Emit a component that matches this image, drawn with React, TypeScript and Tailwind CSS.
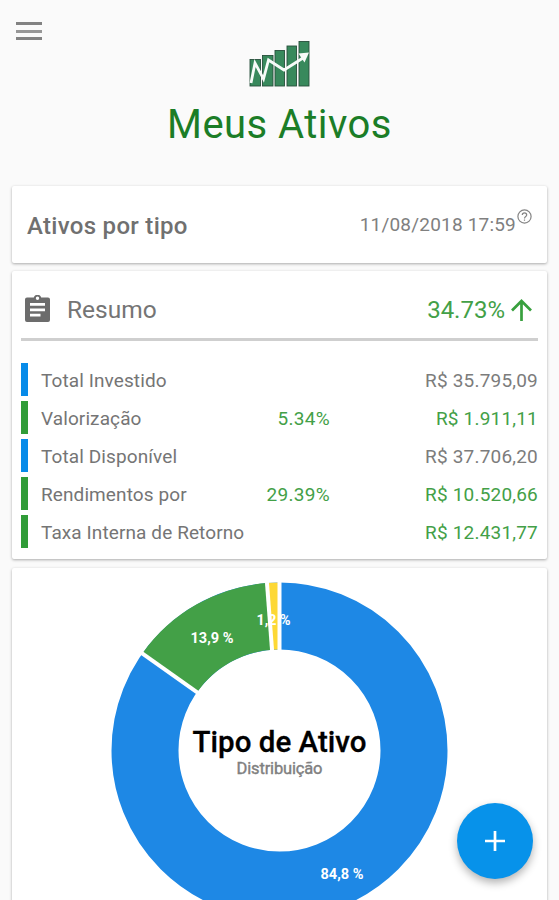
import React from "react";

type Row = { label: string; pct?: string; value: string; bar: string; tone: string };

const rows: Row[] = [
  { label: "Total Investido", value: "R$ 35.795,09", bar: "bg-[#078be9]", tone: "text-[#7c7c7c]" },
  { label: "Valorização", pct: "5.34%", value: "R$ 1.911,11", bar: "bg-[#309c38]", tone: "text-[#43a047]" },
  { label: "Total Disponível", value: "R$ 37.706,20", bar: "bg-[#078be9]", tone: "text-[#7c7c7c]" },
  { label: "Rendimentos por", pct: "29.39%", value: "R$ 10.520,66", bar: "bg-[#309c38]", tone: "text-[#43a047]" },
  { label: "Taxa Interna de Retorno", value: "R$ 12.431,77", bar: "bg-[#309c38]", tone: "text-[#43a047]" },
];

const card = "mx-3 w-[535px] shrink-0 rounded-[2px] bg-white shadow-[0_1px_3px_rgba(0,0,0,0.32)]";

function Logo() {
  return (
    <svg className="mt-[40px] block h-[48px] w-[62px]" viewBox="0 0 62 48">
      <g fill="#38895c" stroke="#28503c" strokeWidth="0.9">
        <rect x="1" y="19.5" width="10.5" height="26.5" />
        <rect x="13.5" y="15.5" width="10.5" height="30.5" />
        <rect x="26" y="10.5" width="9.5" height="35.5" />
        <rect x="38" y="6" width="9.5" height="40" />
        <rect x="50" y="1.5" width="10" height="44.5" />
      </g>
      <path d="M2 43 L6 23 L14.5 39 L19.5 20 L35 30 L54 18" fill="none" stroke="#f7fbf8" strokeWidth="2.8" />
      <path d="M60 12.5 L49.5 13.5 L55.5 22.5 Z" fill="#f7fbf8" />
    </svg>
  );
}

function Donut() {
  return (
    <svg className="block h-[339px] w-[339px]" viewBox="-169.5 -169.5 339 339" fontFamily="Roboto, sans-serif" textAnchor="middle">
      <circle r="134.5" fill="none" stroke="#1e88e5" strokeWidth="67" />
      <path d="M-137.2 -97 A168 168 0 0 1 -12.5 -167.5 L-7.5 -100.7 A101 101 0 0 0 -82.5 -58.3 Z" fill="#43a047" />
      <path d="M-12.5 -167.5 A168 168 0 0 1 0 -168 L0 -101 A101 101 0 0 0 -7.5 -100.7 Z" fill="#fdd835" />
      <g stroke="#fff" strokeWidth="4">
        <path d="M0 -172 V-96" />
        <path d="M-12.8 -171.5 L-7.1 -95.7" />
        <path d="M-140.5 -99.3 L-78.4 -55.4" />
      </g>
      <g fill="#fff" fontSize="14.5" fontWeight="700">
        <text x="-67.5" y="-107.5" textLength="43" lengthAdjust="spacingAndGlyphs">13,9 %</text>
        <text x="-6" y="-125.5" textLength="34" lengthAdjust="spacingAndGlyphs">1,2 %</text>
        <text x="62.5" y="128.5" textLength="43" lengthAdjust="spacingAndGlyphs">84,8 %</text>
      </g>
      <text x="0" y="1.5" fontSize="29.5" fontWeight="500" fill="#000" stroke="#000" strokeWidth="0.3" textLength="174">Tipo de Ativo</text>
      <text x="0" y="23.5" fontSize="16.5" fill="#808080" stroke="#808080" strokeWidth="0.4" textLength="86">Distribuição</text>
    </svg>
  );
}

export default function App() {
  return (
    <div className="relative flex h-[900px] w-[559px] flex-col overflow-hidden bg-[#fafafa] font-[Roboto,sans-serif] text-[#757575]">
      <header className="flex h-[186px] shrink-0 items-start">
        <button className="ml-4 mt-[22px] flex h-[18px] w-[26px] flex-col justify-between" aria-label="Menu">
          <span className="h-[3px] w-full bg-[#828282]" />
          <span className="h-[3px] w-full bg-[#979797]" />
          <span className="h-[3px] w-full bg-[#828282]" />
        </button>
        <div className="-ml-[42px] flex w-[559px] flex-col items-center">
          <Logo />
          <h1 className="mt-[13px] whitespace-nowrap text-[40px] leading-[48px] tracking-[0.45px] text-[#1b7d27]">Meus Ativos</h1>
        </div>
      </header>

      <section className={`${card} flex h-[77px] items-center justify-between pl-[15px] pr-[15px]`}>
        <h2 className="mt-[2px] text-[24px] font-medium leading-none tracking-[0.3px] text-[#707070]">Ativos por tipo</h2>
        <div className="flex items-center">
          <span className="text-[19px] leading-none tracking-[0.2px] text-[#808080]">11/08/2018 17:59</span>
          <svg className="-mt-4 ml-px size-[15px]" viewBox="0 0 15 15" fill="none" stroke="#858585" strokeWidth="1.2">
            <circle cx="7.5" cy="7.5" r="6.6" />
            <path d="M5.3 6 C5.3 3.1 9.7 3.1 9.7 6 C9.7 7.5 7.5 7.6 7.5 9.4 M7.5 10.4 V11.8" />
          </svg>
        </div>
      </section>

      <section className={`${card} mt-2 h-[288px] px-[9px]`}>
        <div className="flex h-[70px] items-center border-b-[3px] border-[#cfcfcf] pt-[11px]">
          <svg className="-mt-[3px] ml-1 h-[28px] w-[25px]" viewBox="0 0 25 28">
            <path fillRule="evenodd" fill="#6c6c6c" d="M2 2.5 H8.8 C9.8 -1.3 15.2 -1.3 16.2 2.5 H23 Q25 2.5 25 4.5 V25 Q25 27 23 27 H2 Q0 27 0 25 V4.5 Q0 2.5 2 2.5 Z M12.5 1.5 A1.7 1.7 0 1 0 12.5 4.9 A1.7 1.7 0 1 0 12.5 1.5 Z M5 8 V10.8 H20 V8 Z M5 13.4 V16.2 H20 V13.4 Z M5 18.8 V21.6 H15.5 V18.8 Z" />
          </svg>
          <h3 className="ml-[17px] text-[24.5px] leading-none">Resumo</h3>
          <span className="ml-auto text-[24px] leading-none text-[#43a047]">34.73%</span>
          <svg className="-mt-px ml-[6px] mr-[6px] h-[22px] w-[21px]" viewBox="0 0 21 22" fill="none" stroke="#38a03e" strokeWidth="2.7">
            <path d="M10.5 22 V2.5 M1 11.5 L10.5 2 L20 11.5" />
          </svg>
        </div>
        <ul className="mt-[22px] flex flex-col gap-[5.6px]">
          {rows.map((r) => (
            <li key={r.label} className="flex h-[32.5px] items-center text-[19px] leading-none">
              <span className={`h-full w-[7px] ${r.bar}`} />
              <span className="ml-[13px] mt-[2px] whitespace-nowrap tracking-[0.1px]">{r.label}</span>
              <span className="ml-auto mt-[2px] tracking-[0.3px] text-[#43a047]">{r.pct}</span>
              <span className={`mt-[2px] w-[208px] text-right tracking-[0.2px] ${r.tone}`}>{r.value}</span>
            </li>
          ))}
        </ul>
      </section>

      <section className={`${card} mt-[9px] flex h-[350px] justify-center pt-[13px]`}>
        <Donut />
      </section>

      <button className="absolute left-[457px] top-[803px] flex size-[76px] items-center justify-center rounded-full bg-[#0792ea] shadow-[0_4px_8px_rgba(0,0,0,0.3)]" aria-label="Adicionar">
        <svg className="size-[20px]" viewBox="0 0 20 20" stroke="#fff" strokeWidth="2.7">
          <path d="M10 0 V20 M0 10 H20" />
        </svg>
      </button>
    </div>
  );
}
